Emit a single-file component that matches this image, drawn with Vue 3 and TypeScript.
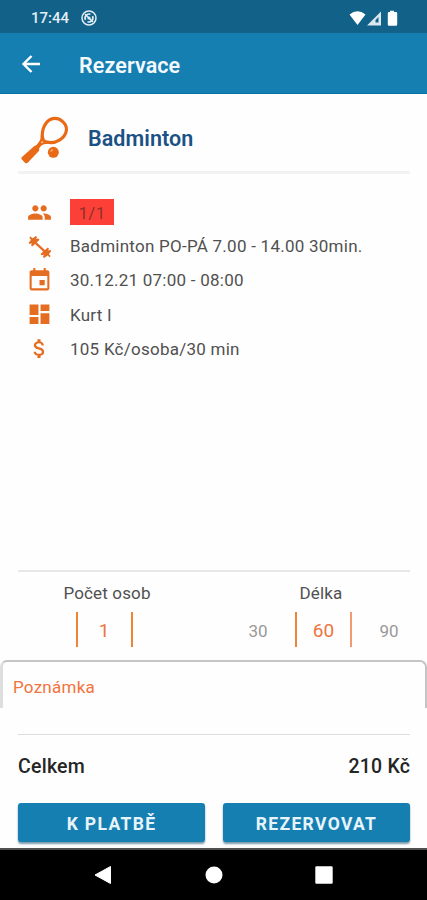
<script setup lang="ts">
interface Detail {
  icon: string
  text: string
  full?: boolean
}

const details: Detail[] = [
  {
    icon: 'M16 11c1.66 0 2.99-1.34 2.99-3S17.66 5 16 5s-3 1.34-3 3 1.34 3 3 3zm-8 0c1.66 0 2.99-1.34 2.99-3S9.66 5 8 5 5 6.34 5 8s1.34 3 3 3zm0 2c-2.33 0-7 1.17-7 3.5V19h14v-2.500C15 14.170 10.330 13 8 13zm8 0c-.29 0-.62.020-.97.050 1.160.84 1.970 1.970 1.970 3.450V19h6v-2.500c0-2.330-4.670-3.500-7-3.500z',
    text: '1/1',
    full: true,
  },
  {
    icon: 'M3.400 2.300L5.300 4.100L8.600 1.900L9.700 3L8.700 4.800L11 4.400L12 5.500L9.400 8.100L17.200 15.300L20 12.900L21 13.900L20.400 16L22.300 15.200L23.300 16.200L21 19.500L22.700 21.200L21.600 22.300L19.900 20.600L16.400 23L15.300 22L16.200 20L14 20.500L12.900 19.500L15.500 16.900L7.700 9.700L5 12.100L4 11L4.500 8.900L2.600 9.700L1.500 8.700L3.800 5.400L2.200 3.700Z',
    text: 'Badminton PO-PÁ 7.00 - 14.00 30min.',
  },
  {
    icon: 'M17 11.500h-5v5h5v-5zM16 0v2.200H8V0H6v2.200H4.500C3.400 2.200 2.500 3.100 2.500 4.200V19.500c0 1.100.9 2 2 2h15c1.100 0 2-.9 2-2V4.200c0-1.100-.9-2-2-2H18V0h-2zm3.500 19.500H4.500V7.700h15v11.800z',
    text: '30.12.21 07:00 - 08:00',
  },
  { icon: 'M2.500 12.500h8.500V2.500H2.500v10zm0 8.500h8.500v-6.500H2.500v6.500zm10.500 0h8.500V10.700H13V21zm0-18.500v6.200h8.500V2.500H13z', text: 'Kurt I' },
  {
    icon: 'M11.800 10.900c-2.270-.59-3-1.200-3-2.150 0-1.090 1.010-1.850 2.700-1.850 1.780 0 2.440.85 2.500 2.100h2.210c-.07-1.720-1.120-3.300-3.210-3.810V3h-3v2.160c-1.940.42-3.500 1.680-3.500 3.610 0 2.310 1.910 3.460 4.700 4.130 2.500.6 3 1.480 3 2.410 0 .69-.49 1.790-2.700 1.790-2.060 0-2.870-.92-2.980-2.100h-2.200c.12 2.190 1.760 3.420 3.680 3.830V21h3v-2.150c1.950-.37 3.500-1.500 3.500-3.550 0-2.840-2.430-3.810-4.700-4.400z',
    text: '105 Kč/osoba/30 min',
  },
]
</script>

<template>
  <div class="screen">
    <div class="status">
      <span class="clock">17:44</span>
      <svg class="sync" viewBox="0 0 16 16" fill="none" stroke="#e4eef5">
        <circle cx="8" cy="8" r="7" stroke-width="1.500" />
        <path d="M4.500 9.800A4 4 0 0 1 9.500 4.300M11.500 6.200A4 4 0 0 1 6.500 11.700" stroke-width="1.700" />
        <path d="M4 4l8 8" stroke-width="1.400" />
        <circle cx="8" cy="8" r="1.600" fill="#e4eef5" stroke="none" />
      </svg>
      <svg class="signals" viewBox="0 0 50 16">
        <path d="M.5 4.500Q8.500-2 16.500 4.500L8.500 15z" fill="#fff" />
        <path d="M32 1.500V15.500H18z" fill="#dbe6ef" />
        <path d="M29.500 7v5.500h-3v-2.500z" fill="#14638c" />
        <path d="M41 .8h4v1.200h2q1.200 0 1.200 1.200v11.300q0 1.200-1.200 1.200h-7q-1.200 0-1.200-1.200V3.200q0-1.200 1.200-1.200h1z" fill="#fff" />
      </svg>
    </div>

    <header class="appbar">
      <svg class="back" viewBox="0 0 20 20" fill="none" stroke="#fff" stroke-width="2.400">
        <path d="M19 10H3M10.500 2L2.500 10l8 8" />
      </svg>
      <h1>Rezervace</h1>
    </header>

    <main>
      <section class="sport">
        <svg class="racket" viewBox="0 0 180 180">
          <path d="M84 94C76 65 94 31 119 31C139 31 157 50 154 68C150 91 122 109 96 102Q86 101 84 94z" fill="none" stroke="#e86a16" stroke-width="9.500" />
          <path d="M80 82Q82 97 72 107L61 120M101 104Q84 104 75 112L66 124" fill="none" stroke="#e86a16" stroke-width="7" />
          <path d="M58 114Q61 111 65 115L72 122Q75 126 71 130L38 164Q34 168 30 164L20 154Q17 150 21 147z" fill="#e86a16" />
          <circle cx="115" cy="133" r="16.500" fill="#e86a16" />
          <path d="M107 131q1-5 7-5" fill="none" stroke="#f8ae78" stroke-width="4" />
        </svg>
        <h2>Badminton</h2>
      </section>

      <ul class="details">
        <li v-for="item in details" :key="item.text">
          <svg viewBox="0 0 24 24"><path :d="item.icon" /></svg>
          <span :class="{ full: item.full }">{{ item.text }}</span>
        </li>
      </ul>

      <section class="pickers">
        <div class="picker people">
          <h3>Počet osob</h3>
          <div class="wheel"><i></i><b>1</b><i></i></div>
        </div>
        <div class="picker length">
          <h3>Délka</h3>
          <div class="wheel"><i>30</i><b>60</b><i>90</i></div>
        </div>
      </section>

      <div class="note">Poznámka</div>

      <section class="total"><span>Celkem</span><span class="price">210 Kč</span></section>

      <div class="actions">
        <button class="pay">K PLATBĚ</button>
        <button class="reserve">REZERVOVAT</button>
      </div>
    </main>

    <nav>
      <svg viewBox="0 0 18 20"><path d="M16.500 1.500V18.500L1 10z" fill="#fff" stroke="#fff" stroke-linejoin="round" /></svg>
      <svg viewBox="0 0 18 18"><circle cx="9" cy="9" r="8.500" fill="#fff" /></svg>
      <svg viewBox="0 0 18 18"><rect x=".3" y=".3" width="17.400" height="17.400" rx="1.300" fill="#fff" /></svg>
    </nav>
  </div>
</template>

<style>
body {
  margin: 0;
  background: #fff;
}
</style>

<style scoped>
* {
  box-sizing: border-box;
}
h1, h2, h3, ul {
  margin: 0;
  padding: 0;
}
svg {
  display: block;
  flex: none;
}
.screen {
  width: 427px;
  height: 900px;
  display: flex;
  flex-direction: column;
  overflow: hidden;
  background: #fefefe;
  color: #505050;
  font-family: Roboto, "Noto Sans", sans-serif;
}
.status {
  height: 33px;
  flex: none;
  display: flex;
  align-items: center;
  padding: 2px 28px 0 31px;
  background: #116189;
  color: #e4eef5;
}
.clock {
  width: 50px;
  font-size: 15px;
  font-weight: 500;
}
.sync {
  width: 16px;
  height: 16px;
}
.signals {
  width: 50px;
  height: 16px;
  margin-left: auto;
}
.appbar {
  height: 61px;
  flex: none;
  display: flex;
  align-items: center;
  padding: 1px 0 0 21px;
  background: #167fb2;
  border-bottom: 1px solid #0b6fa5;
  color: #f3f9fd;
}
.back {
  width: 20px;
  height: 20px;
  margin-right: 38px;
}
h1 {
  padding-top: 4px;
  font-size: 21.500px;
  line-height: 26px;
  font-weight: 600;
  letter-spacing: 0.100px;
}
main {
  flex: 1;
  min-height: 0;
  display: flex;
  flex-direction: column;
}
.sport {
  height: 80px;
  flex: none;
  margin: 0 17px 0 18px;
  border-bottom: 3px solid #f2f2f2;
  display: flex;
  align-items: center;
  padding-top: 11px;
}
.racket {
  width: 60px;
  height: 60px;
  margin-left: -3px;
}
h2 {
  margin: 0 0 0 13px;
  padding-top: 1px;
  color: #1b5285;
  font-size: 21.500px;
  font-weight: 600;
  letter-spacing: 0.080px;
}
.details {
  list-style: none;
  padding: 21px 0 0 27px;
  height: 396px;
  flex: none;
}
li {
  display: flex;
  align-items: center;
  height: 34.200px;
  font-size: 17px;
  letter-spacing: 0.250px;
}
li svg {
  width: 25px;
  height: 25px;
  margin-right: 18px;
  fill: #e56d22;
}
.full {
  width: 44px;
  height: 26px;
  line-height: 28px;
  text-align: center;
  background: #fd4037;
  color: #8e302c;
}
.pickers {
  height: 90px;
  flex: none;
  margin: 0 17px 0 18px;
  border-top: 2px solid #e8e8e8;
  display: flex;
  justify-content: space-between;
}
.picker {
  width: 178px;
  display: flex;
  flex-direction: column;
  align-items: center;
  padding-top: 11px;
}
h3 {
  font-size: 17px;
  line-height: 20px;
  font-weight: 400;
  letter-spacing: 0.150px;
}
.wheel {
  display: flex;
  align-items: center;
  height: 35px;
  margin-top: 9px;
}
.people .wheel {
  margin-right: 6px;
}
.length .wheel {
  margin-left: 5px;
}
.wheel b {
  width: 57px;
  height: 35px;
  line-height: 37px;
  text-align: center;
  font-weight: 400;
  font-size: 19px;
  color: #ed7541;
  border: solid #ee8435;
  border-width: 0 2px;
}
.wheel i {
  width: 74px;
  padding-top: 2px;
  text-align: center;
  font-style: normal;
  font-size: 17px;
  color: #999;
}
.length .wheel b {
  border-right-color: #f29a72;
}
.note {
  height: 48px;
  flex: none;
  border: 2px solid #c4c4c4;
  border-left-width: 3px;
  border-left-color: #dedede;
  border-bottom: 0;
  border-radius: 7px 7px 0 0;
  padding: 15px 0 0 10px;
  color: #f2733c;
  font-size: 17px;
  line-height: 20px;
  letter-spacing: 0.250px;
}
.total {
  height: 69px;
  flex: none;
  margin: 26px 17px 0 18px;
  border-top: 1px solid #dedede;
  display: flex;
  justify-content: space-between;
  align-items: center;
  padding-bottom: 5px;
  font-size: 19.500px;
  font-weight: 500;
  letter-spacing: 0.250px;
  color: #252525;
}
.price {
  margin-right: -0.250px;
}
.actions {
  display: flex;
  gap: 18px;
  margin: 0 17px 0 18px;
}
button {
  flex: 1;
  height: 39px;
  padding: 2px 0 0;
  border: 0;
  border-radius: 3px;
  background: #167fb2;
  color: #e8f4fb;
  font: 700 17.500px Roboto, "Noto Sans", sans-serif;
  letter-spacing: 1.350px;
  box-shadow: 0 2px 2px #7c9aaa;
}
nav {
  height: 52px;
  flex: none;
  border-top: 2px solid #505050;
  background: #000;
  display: flex;
  align-items: center;
  padding-left: 94px;
  gap: 92px;
}
nav svg {
  width: 18px;
  height: 20px;
}
nav svg + svg {
  margin-left: 0.500px;
}
</style>
